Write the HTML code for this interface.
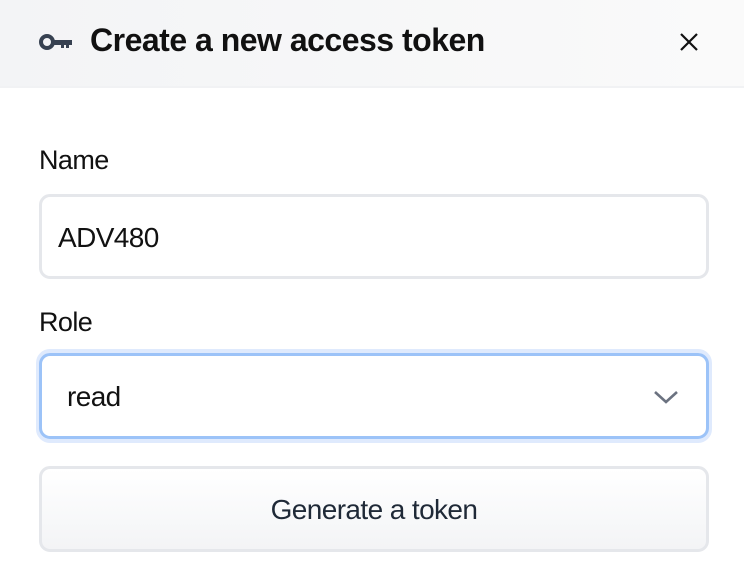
<!DOCTYPE html>
<html><head><style>
*{box-sizing:border-box;margin:0;padding:0}
body{width:744px;height:582px;background:#fff;font-family:"Liberation Sans",sans-serif;position:relative;overflow:hidden;color:#111}
.hdr{position:absolute;left:0;top:0;width:744px;height:88px;background:linear-gradient(90deg,#f3f4f6,#fafafa);border-bottom:2px solid #f1f2f4}
.title{position:absolute;left:90px;top:22px;font-size:32px;font-weight:bold;letter-spacing:-0.5px;color:#111}
.lbl{position:absolute;left:39px;font-size:27px;letter-spacing:-0.6px;color:#111}
.box{position:absolute;left:39px;width:670px;border-radius:11px;border:3px solid #e5e7eb;background:#fff}
.val{position:absolute;font-size:28px;letter-spacing:-0.6px;color:#111}
</style></head><body>
<div class="hdr">
<svg style="position:absolute;left:39px;top:32px" width="34" height="20" viewBox="0 0 34 20"><circle cx="8" cy="10" r="6" fill="none" stroke="#374151" stroke-width="4"/><path d="M14 8h19v5h-3v3h-3v-3h-2v3h-3v-3h-8z" fill="#374151"/></svg>
<div class="title">Create a new access token</div>
<svg style="position:absolute;left:678px;top:31px" width="22" height="22" viewBox="0 0 22 22"><path d="M3 3L19 19M19 3L3 19" stroke="#111" stroke-width="2.2"/></svg>
</div>
<div class="lbl" style="top:145px">Name</div>
<div class="box" style="top:194px;height:85px"></div>
<div class="val" style="left:58px;top:222px">ADV480</div>
<div class="lbl" style="top:307px">Role</div>
<div class="box" style="left:36px;top:349px;width:676px;height:94px;border:4px solid #dfeafd;border-radius:14px"></div>
<div class="box" style="top:353px;height:86px;border-color:#9cc3f8"></div>
<div class="val" style="left:67px;top:381px">read</div>
<svg style="position:absolute;left:653px;top:389px" width="26" height="16" viewBox="0 0 26 16"><path d="M2 3L13 13L24 3" fill="none" stroke="#6b7280" stroke-width="2.6"/></svg>
<div class="box" style="top:466px;height:86px;background:linear-gradient(#fff,#f3f4f6)"></div>
<div class="val" style="left:39px;width:670px;text-align:center;top:494px;color:#1f2937">Generate a token</div>
</body></html>
